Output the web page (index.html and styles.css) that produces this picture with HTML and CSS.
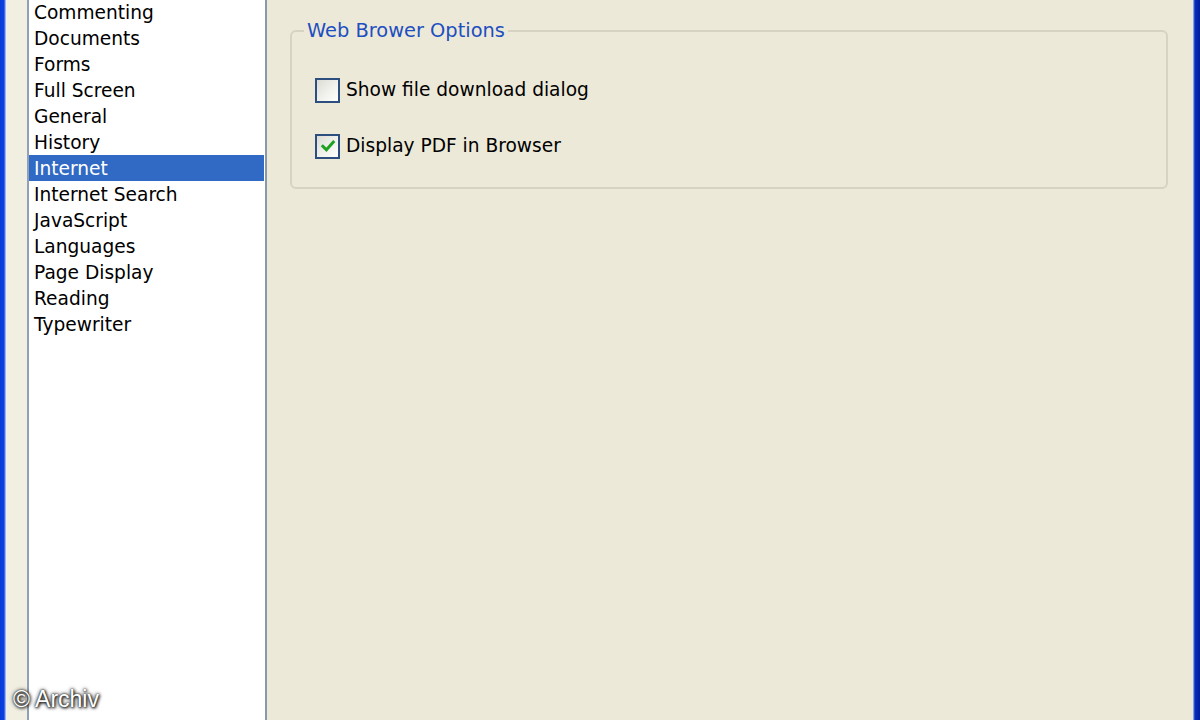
FILE: index.html
```html
<!DOCTYPE html>
<html>
<head>
<meta charset="utf-8">
<title>Preferences - Internet</title>
<link rel="stylesheet" href="styles.css">
</head>
<body>
<div class="window">
  <div class="frame-left"></div>
  <div class="sidebar">
    <ul class="category-list">
      <li class="item">Commenting</li>
      <li class="item">Documents</li>
      <li class="item">Forms</li>
      <li class="item">Full Screen</li>
      <li class="item">General</li>
      <li class="item">History</li>
      <li class="item selected">Internet</li>
      <li class="item">Internet Search</li>
      <li class="item">JavaScript</li>
      <li class="item">Languages</li>
      <li class="item">Page Display</li>
      <li class="item">Reading</li>
      <li class="item">Typewriter</li>
    </ul>
  </div>
  <div class="content">
    <fieldset class="group">
      <legend class="group-title">Web Brower Options</legend>
      <div class="options">
        <label class="option">
          <span class="checkbox"></span>
          <span class="option-label">Show file download dialog</span>
        </label>
        <label class="option">
          <span class="checkbox checked">
            <svg class="check" viewBox="0 0 14 14" width="16" height="16"><path d="M2.5 7.2 L5.6 10.3 L11.6 3.6" fill="none" stroke="#21a121" stroke-width="2.6" stroke-linecap="square"/></svg>
          </span>
          <span class="option-label">Display PDF in Browser</span>
        </label>
      </div>
    </fieldset>
  </div>
  <div class="frame-right"></div>
  <div class="watermark">© Archiv</div>
</div>
</body>
</html>
```

FILE: styles.css
```css
html, body {
  margin: 0;
  padding: 0;
}
body {
  width: 1200px;
  height: 720px;
  overflow: hidden;
  background: #ece9d8;
  font-family: "DejaVu Sans", Verdana, sans-serif;
  font-size: 18.6px;
  color: #000;
}
.window {
  position: relative;
  display: flex;
  height: 720px;
}
.frame-left {
  width: 6px;
  flex: none;
  background: linear-gradient(to right, #0a3ad6 0, #0840e4 4px, #6d8ef0 5px, #c9d6f6 6px);
}
.sidebar {
  width: 261px;
  flex: none;
  padding-left: 21px;
  box-sizing: border-box;
  background: #f1eee2;
  display: flex;
}
.category-list {
  list-style: none;
  margin: 0;
  padding: 0;
  flex: 1;
  background: #fff;
  border-left: 2px solid #8fa1b8;
  border-right: 2px solid #8a98ad;
  margin-top: -1px;
}
.item {
  height: 24px;
  line-height: 24px;
  padding-top: 2px;
  padding-left: 5px;
  white-space: nowrap;
  margin-right: 1px;
}
.item.selected {
  background: #316ac5;
  color: #fff;
}
.content {
  flex: 1;
  padding: 20px 25px 0 23px;
  background: #ece9d8;
}
.group {
  margin: 0;
  border: 2px solid #d6d3c2;
  border-radius: 6px;
  padding: 36px 22px 29px 23px;
  min-width: 0;
}
.group-title {
  color: #1d4fc0;
  font-size: 19.4px;
  padding: 0 3px;
  margin-left: -11px;
  line-height: 22px;
}
.options {
  display: flex;
  flex-direction: column;
  gap: 32px;
}
.option {
  display: flex;
  align-items: center;
  gap: 6px;
  height: 24px;
}
.checkbox {
  width: 21px;
  height: 21px;
  border: 2px solid #2d4f80;
  background: linear-gradient(135deg, #dcdcd4 0%, #eeeee9 45%, #ffffff 100%);
  display: flex;
  align-items: center;
  justify-content: center;
  flex: none;
}
.option-label {
  line-height: 24px;
  white-space: nowrap;
}
.frame-right {
  width: 7px;
  flex: none;
  background: linear-gradient(to right, #b8d0f2 0, #4a73d6 1px, #0a2db8 2px, #001e9c 7px);
}
.watermark {
  position: absolute;
  left: 13px;
  bottom: 7px;
  font-family: "Liberation Sans", Arial, sans-serif;
  font-size: 23px;
  color: #fff;
  text-shadow: 0 0 4px #222, 0 0 2px #222, 1px 1px 3px #000;
}
```
